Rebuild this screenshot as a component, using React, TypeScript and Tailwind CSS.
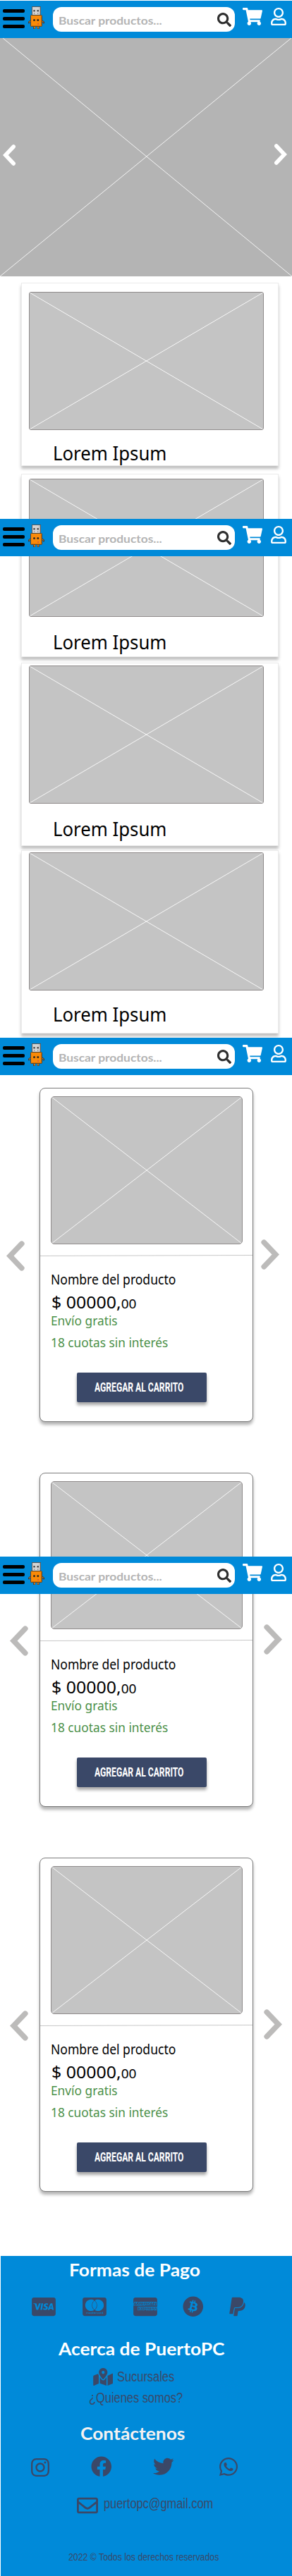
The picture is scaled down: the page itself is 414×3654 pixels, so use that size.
import {
  FaBitcoin,
  FaCcAmex,
  FaCcMastercard,
  FaCcVisa,
  FaFacebook,
  FaInstagram,
  FaMapMarkedAlt,
  FaPaypal,
  FaRegEnvelope,
  FaRegUser,
  FaSearch,
  FaShoppingCart,
  FaTwitter,
  FaWhatsapp,
} from 'react-icons/fa';

function UsbMascot() {
  return (
    <svg className="ml-[5px] mt-2 h-[33px] w-[23px] shrink-0" viewBox="0 0 23 33">
      <path d="M3.2 20.5 1 22.5v1.8M19.8 20.5l2.2 2v1.8" fill="none" stroke="#3c3a3a" strokeWidth="2.2" />
      <path d="M3.2 20.8 1.2 22.6M19.8 20.8l2 1.8" fill="none" stroke="#f98a08" strokeWidth="1" />
      <path d="M8.6 28v4M14.2 28v4" stroke="#3c3a3a" strokeWidth="3" />
      <path d="M8.8 28v3.4M14 28v3.4" stroke="#f98a08" strokeWidth="1.4" />
      <rect x="5.5" y="0.5" width="12" height="12.5" fill="#d3d3d3" stroke="#55595c" />
      <path d="M16 1v11.5" stroke="#b2b2b2" strokeWidth="1.4" />
      <rect x="7.4" y="5.2" width="2.2" height="2.2" fill="#333" />
      <rect x="12.6" y="5.2" width="2.2" height="2.2" fill="#333" />
      <rect x="8" y="9.6" width="1.2" height="1.2" fill="#777" />
      <rect x="13" y="9.6" width="1.2" height="1.2" fill="#777" />
      <rect x="3.5" y="12.5" width="16" height="16" rx="1" fill="#f98a08" stroke="#4f4332" />
      <path d="M18.4 13.5v14.2H4.2" fill="none" stroke="#c96b05" strokeWidth="0.9" />
      <circle cx="8.5" cy="19.6" r="1.5" fill="#33291f" />
      <circle cx="13.8" cy="19.6" r="1.5" fill="#33291f" />
      <rect x="13.2" y="24" width="1.8" height="1.8" fill="#d8543f" />
    </svg>
  );
}

function Header() {
  return (
    <header className="flex h-[53px] w-full items-start bg-[#008ad9]">
      <button className="ml-1 mt-3 flex w-[31px] shrink-0 flex-col gap-1.5" aria-label="Menú">
        <span className="h-[5px] rounded-[2px] bg-black" />
        <span className="h-[5px] rounded-[2px] bg-black" />
        <span className="h-[5px] rounded-[2px] bg-black" />
      </button>
      <UsbMascot />
      <div className="ml-3 mt-[9px] flex h-[35px] w-[258px] shrink-0 items-start justify-between rounded-xl bg-white pl-2 pr-[5px]">
        <span className="mt-px inline-block origin-left scale-x-[1.085] whitespace-nowrap font-['Lato',sans-serif] text-base font-bold leading-[35px] text-[#b4b4b4]">
          Buscar productos...
        </span>
        <FaSearch className="mt-[7.5px] h-5 w-5 text-[#2e2e2e]" />
      </div>
      <FaShoppingCart className="ml-[11px] mt-2.5 h-[25px] w-7 shrink-0 text-white" />
      <FaRegUser className="ml-3 mt-2.5 h-[25px] w-[22px] shrink-0 text-white" />
    </header>
  );
}

function HeroArrow({ flip = false }: { flip?: boolean }) {
  return (
    <svg className={flip ? 'h-[30px] w-[18px] -scale-x-100' : 'mt-px h-[30px] w-[18px]'} viewBox="0 0 18 30">
      <path d="M15.2 3 3.8 15l11.4 12" fill="none" stroke="#fff" strokeWidth="5.6" strokeLinecap="round" />
    </svg>
  );
}

function Hero() {
  return (
    <section className="relative flex h-[338px] items-start justify-between bg-[#b4b4b4] pl-1 pr-[7px] pt-[150px]">
      <svg className="absolute inset-0 h-full w-full" viewBox="0 0 414 338">
        <path d="M4 0 414 338M413 0 0 338" stroke="#f3f3f3" strokeWidth="1" />
      </svg>
      <HeroArrow />
      <HeroArrow flip />
    </section>
  );
}

function Placeholder({ className }: { className: string }) {
  return (
    <div className={`overflow-hidden border border-[#8f8b8b] bg-[#c4c4c4] ${className}`}>
      <svg className="h-full w-full" viewBox="0 0 100 100" preserveAspectRatio="none">
        <path d="M0 0 100 100M100 0 0 100" stroke="#f7f7f7" strokeWidth="1" vectorEffect="non-scaling-stroke" />
      </svg>
    </div>
  );
}

const categories = [
  { card: 'mt-[9px] pt-3', title: 'mt-4' },
  { card: 'mt-[11px] pt-1.5', title: 'mt-[19px]' },
  { card: 'mt-2 pt-[3px]', title: 'mt-[19px]' },
  { card: 'mt-1.5 pt-0.5', title: 'mt-[17px]' },
];

function CategoryCard({ card, title }: { card: string; title: string }) {
  return (
    <article
      className={`ml-[30px] flex h-[260px] w-[365px] shrink-0 flex-col border border-[#ececec] bg-white pl-2.5 shadow-[0_4px_4px_rgba(0,0,0,0.25)] ${card}`}
    >
      <Placeholder className="h-[196px] w-[333px] shrink-0 rounded-[3px]" />
      <h2
        className={`ml-[34px] origin-left scale-x-[0.92] self-start whitespace-nowrap font-['Noto_Sans',sans-serif] text-[28px] leading-8 text-black ${title}`}
      >
        Lorem Ipsum
      </h2>
    </article>
  );
}

function Chevron({ className }: { className: string }) {
  return (
    <svg className={`h-[43px] w-[26px] shrink-0 ${className}`} viewBox="0 0 26 43">
      <path d="M21.8 4.2 5.2 21.5l16.6 17.3" fill="none" stroke="#bcbbba" strokeWidth="7.6" strokeLinecap="round" />
    </svg>
  );
}

const products = [
  { row: 'mt-[18px] pl-[9px]', left: 'mr-[21px]', right: 'ml-[11px]' },
  { row: 'mt-[72px] pl-3.5', left: 'mr-4', right: 'ml-[15px]' },
  { row: 'mt-[72px] pl-3.5', left: 'mr-4', right: 'ml-[15px]' },
];

function Product({ row, left, right }: { row: string; left: string; right: string }) {
  return (
    <div className={`flex items-start ${row}`}>
      <Chevron className={`mt-[217px] ${left}`} />
      <article className="flex h-[474px] w-[303px] shrink-0 flex-col items-start rounded-lg border border-[#7b7b7b] bg-white pt-[11px] font-['Noto_Sans',sans-serif] shadow-[0_4px_4px_rgba(0,0,0,0.3)]">
        <Placeholder className="ml-[15px] h-[210px] w-[272px] rounded-[5px]" />
        <svg className="mt-[15px] h-0.5 w-full" viewBox="0 0 301 2" preserveAspectRatio="none">
          <path d="M0 1.5 301 .5" stroke="#c8c8c8" strokeWidth="1" />
        </svg>
        <h3 className="ml-[15px] mt-[21px] origin-left scale-x-[0.922] whitespace-nowrap text-[19px] leading-6 text-black">
          Nombre del producto
        </h3>
        <p className="ml-4 mt-1.5 h-7 origin-left scale-x-[1.06] whitespace-nowrap text-[23.5px] leading-7 text-black">
          $ 00000,<span className="text-[18px] leading-none">00</span>
        </p>
        <p className="ml-[15px] origin-left scale-x-[0.935] whitespace-nowrap text-[18.5px] leading-6 text-[#4b9048]">
          Envío gratis
        </p>
        <p className="ml-[15px] mt-[7px] origin-left scale-x-[0.935] whitespace-nowrap text-[18.5px] leading-6 text-[#4b9048]">
          18 cuotas sin interés
        </p>
        <button className="ml-[52px] mt-[31px] flex h-[42px] w-[184px] rounded-[2px] bg-[#3a4868] pl-[25px] shadow-[0_4px_4px_rgba(0,0,0,0.35)]">
          <span className="origin-left scale-x-[0.638] whitespace-nowrap font-['Roboto',sans-serif] text-[19px] font-bold leading-[42px] text-white">
            AGREGAR AL CARRITO
          </span>
        </button>
      </article>
      <Chevron className={`mt-[215px] -scale-x-100 ${right}`} />
    </div>
  );
}

function Footer() {
  const title = "origin-left scale-x-110 whitespace-nowrap font-['Lato',sans-serif] text-2xl font-bold leading-9";
  const link = 'origin-left scale-x-[0.82] whitespace-nowrap text-xl leading-6';
  return (
    <footer className="ml-px mt-[91px] flex h-[454px] flex-col items-start bg-[#008ad9] pt-0.5 font-['Liberation_Sans',sans-serif] text-[#3a4868]">
      <h2 className={`ml-[97px] text-white ${title}`}>Formas de Pago</h2>
      <div className="ml-[43.7px] mt-[19px] flex h-[30px] items-center">
        <FaCcVisa className="h-[30px] w-[34px]" />
        <FaCcMastercard className="ml-[38.3px] h-[30px] w-[34px]" />
        <FaCcAmex className="ml-[38px] h-[30px] w-[34px]" />
        <FaBitcoin className="-mt-px ml-[36.5px] h-[29.5px] w-[29.5px]" />
        <FaPaypal className="-mt-px ml-9 h-[30px] w-[23px]" />
      </div>
      <h2 className={`ml-[82px] mt-[27px] text-white ${title}`}>Acerca de PuertoPC</h2>
      <div className="ml-[130.7px] mt-[9px] flex h-[25px] items-start">
        <FaMapMarkedAlt className="h-[25px] w-[28.5px]" />
        <a className={`ml-1.5 ${link}`}>Sucursales</a>
      </div>
      <a className={`ml-[125px] mt-[5px] ${link}`}>¿Quienes somos?</a>
      <h2 className={`ml-[113px] mt-[21px] text-[#f4f1f1] ${title}`}>Contáctenos</h2>
      <div className="ml-[43px] mt-3.5 flex h-[30px] items-center">
        <FaInstagram className="mt-0.5 h-[30px] w-[26px]" />
        <FaFacebook className="ml-[59px] h-[29.5px] w-[29.5px]" />
        <FaTwitter className="ml-[58.5px] h-[29.5px] w-[29.5px]" />
        <FaWhatsapp className="ml-[64.5px] h-[30px] w-[26px]" />
      </div>
      <div className="ml-[108px] mt-[25px] flex h-[30px] items-start">
        <FaRegEnvelope className="h-[30px] w-[30px]" />
        <a className={`ml-2 ${link}`}>puertopc@gmail.com</a>
      </div>
      <p className="ml-[95.5px] mt-12 origin-left scale-x-[0.82] whitespace-nowrap text-[15px] leading-5">
        2022 © Todos los derechos reservados
      </p>
    </footer>
  );
}

export default function App() {
  return (
    <div className="relative flex h-[3654px] w-[414px] flex-col overflow-hidden bg-white pt-px">
      <Header />
      <Hero />
      <section className="flex flex-col">
        {categories.map((c, i) => (
          <CategoryCard key={i} {...c} />
        ))}
      </section>
      <div className="relative mt-1.5">
        <Header />
      </div>
      <section className="flex flex-col">
        {products.map((p, i) => (
          <Product key={i} {...p} />
        ))}
      </section>
      <Footer />
      <div className="absolute inset-x-0 top-[736px]">
        <Header />
      </div>
      <div className="absolute inset-x-0 top-[2208px]">
        <Header />
      </div>
    </div>
  );
}
